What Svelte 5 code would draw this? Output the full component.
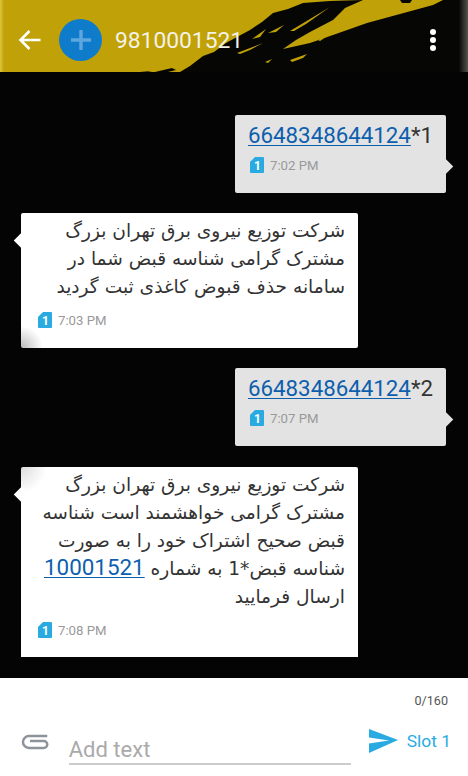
<script>
	const messages = [
		{ id: 1, out: true, link: '6648348644124', text: '*1', time: '7:02 PM' },
		{
			id: 2,
			shade: 'shade-bottom',
			lines: ['شرکت توزیع نیروی برق تهران بزرگ', 'مشترک گرامی شناسه قبض شما در', 'سامانه حذف قبوض کاغذی ثبت گردید'],
			time: '7:03 PM'
		},
		{ id: 3, out: true, link: '6648348644124', text: '*2', time: '7:07 PM' },
		{
			id: 4,
			shade: 'shade-top',
			lines: ['شرکت توزیع نیروی برق تهران بزرگ', 'مشترک گرامی خواهشمند است شناسه', 'قبض صحیح اشتراک خود را به صورت'],
			linkLine: { before: 'شناسه قبض*1 به شماره ', link: '10001521' },
			last: 'ارسال فرمایید',
			time: '7:08 PM'
		}
	];
</script>

<div class="screen">
	<header class="topbar">
		<svg class="wallpaper" viewBox="0 0 468 72" preserveAspectRatio="none" aria-hidden="true">
			<path fill="#060605" d="M180 72 L190 66 L203 56 L214 52 L226 43 L237 37 L250 30 L262 22 L273 13 L288 9 L303 3 L330 1 L363 0 L345 8 L333 20 L310 32 L296 40 L283 49 L310 43 L333 35 L367 23 L400 14 L433 5 L443 0 L468 0 L468 72 Z" />
			<path fill="#060605" d="M155 72 L172 68 L176 70 L168 72 Z M140 72 L152 71 L148 72 Z M400 0 L412 0 L410 3 L402 3 Z" />
			<path fill="#c0a208" d="M290 60 L307 54 L303 58 L292 62 Z M237 53 L263 43 L250 50 L240 54 Z M290 31 L330 7 L306 24 L294 31 Z M268 33 L284 25 L276 32 Z M252 39 L266 29 L260 37 Z M318 40 L326 37 L320 41 Z M338 18 L360 9 L350 15 L340 19 Z M300 40 L322 26 L310 35 Z M265 62 L272 59 L268 63 Z" />
		</svg>
		<button class="back" aria-label="Back">
			<svg viewBox="0 0 24 22" width="24" height="22">
				<path d="M22.5 11H3M11.5 2 2.5 11l9 9" fill="none" stroke="#fff" stroke-width="2.6" />
			</svg>
		</button>
		<div class="avatar">
			<svg viewBox="0 0 20 20" width="20" height="20">
				<path d="M10 0v20M0 10h20" stroke="#5fa6de" stroke-width="3.4" />
			</svg>
		</div>
		<div class="number">9810001521</div>
		<div class="kebab"><i></i><i></i><i></i></div>
	</header>

	<main class="thread">
		{#each messages as m (m.id)}
			<div class="bubble {m.out ? 'out' : 'in'} {m.shade ?? ''}">
				{#if m.out}
					<div class="code"><a href="#{m.id}">{m.link}</a>{m.text}</div>
				{:else}
					<div class="body" dir="rtl">
						{#each m.lines as line}
							<div>{line}</div>
						{/each}
						{#if m.linkLine}
							<div>{m.linkLine.before}<a href="#{m.id}">{m.linkLine.link}</a></div>
							<div>{m.last}</div>
						{/if}
					</div>
				{/if}
				<div class="meta">
					<svg class="sim" viewBox="0 0 14 16" width="14" height="16">
						<path d="M5 0H13a1 1 0 0 1 1 1V15a1 1 0 0 1-1 1H1a1 1 0 0 1-1-1V5Z" fill="#29abe2" />
						<text x="7.4" y="13" text-anchor="middle">1</text>
					</svg>
					<span>{m.time}</span>
				</div>
			</div>
		{/each}
	</main>

	<footer class="composer">
		<div class="count">0/160</div>
		<div class="row">
			<svg class="clip" viewBox="0 0 28 16" width="28" height="16">
				<path d="M26.5 2H8A6 6 0 0 0 8 14H23A3.5 3.5 0 0 0 23 7H9" fill="none" stroke="#8d939b" stroke-width="2.5" />
			</svg>
			<div class="field">Add text</div>
			<div class="send">
				<svg viewBox="0 0 29 24" width="29" height="24">
					<path d="M0 0 29 11 0 24V14.5L20 11.5 0 8.5Z" fill="#29abe2" />
				</svg>
				<span>Slot 1</span>
			</div>
		</div>
	</footer>
</div>

<style>
	:global(body) {
		margin: 0;
		background: #000;
	}
	.screen {
		width: 468px;
		height: 776px;
		display: flex;
		flex-direction: column;
		overflow: hidden;
		font-family: Roboto, sans-serif;
	}
	.topbar {
		position: relative;
		height: 72px;
		flex: none;
		display: flex;
		align-items: center;
		padding: 8px 32px 0 18px;
		box-sizing: border-box;
		background: linear-gradient(90deg, #e0c440 0, #c0a208 4px);
	}
	.topbar::after {
		content: '';
		position: absolute;
		top: 0;
		right: 0;
		bottom: 0;
		width: 9px;
		background: linear-gradient(90deg, #060605, #55554f);
	}
	.wallpaper {
		position: absolute;
		inset: 0;
		width: 100%;
		height: 100%;
	}
	.back,
	.avatar,
	.number,
	.kebab {
		position: relative;
	}
	.back {
		padding: 0;
		border: 0;
		background: none;
		width: 24px;
		height: 22px;
		margin-right: 17px;
	}
	.avatar {
		width: 43px;
		height: 42px;
		border-radius: 50%;
		background: #0f7bcb;
		display: flex;
		align-items: center;
		justify-content: center;
		margin-right: 13px;
		margin-top: -1px;
	}
	.number {
		color: #f4f2e6;
		font-size: 22.8px;
		flex: 1;
	}
	.kebab {
		display: flex;
		flex-direction: column;
		gap: 2px;
	}
	.kebab i {
		width: 6px;
		height: 6px;
		border-radius: 50%;
		background: #fff;
	}
	.thread {
		flex: 1;
		background: #040404;
		display: flex;
		flex-direction: column;
		gap: 20px;
		padding-top: 43px;
		box-sizing: border-box;
	}
	.bubble {
		position: relative;
		box-sizing: border-box;
		border-radius: 2px;
		color: #333;
	}
	.bubble::after {
		content: '';
		position: absolute;
		width: 11px;
		height: 11px;
		transform: rotate(45deg);
	}
	.out {
		width: 211px;
		height: 78px;
		align-self: flex-end;
		margin-right: 22px;
		padding: 7px 13px;
		background: #e3e3e3;
	}
	.out::after {
		right: -5px;
		top: 46px;
		background: #e3e3e3;
	}
	.in {
		width: 337px;
		margin-left: 21px;
		padding: 4px 13px 0 14px;
		background: #fff;
	}
	.in::after {
		left: -5px;
		top: 22px;
		background: #fff;
	}
	.shade-bottom {
		height: 135px;
		background: radial-gradient(circle at 0 100%, #bbb 0, #fff 22px);
	}
	.shade-top {
		height: 190px;
		margin-top: 1px;
		background: radial-gradient(circle at 0 0, #ddd 0, #fff 26px);
		border-radius: 2px 2px 0 0;
	}
	.code {
		font-size: 22.3px;
		line-height: 26px;
	}
	a {
		color: #0d5fae;
		text-decoration: underline;
		text-decoration-thickness: 1px;
		text-underline-offset: 2px;
	}
	.body {
		font-family: 'DejaVu Sans', sans-serif;
		font-size: 18.6px;
		line-height: 28px;
	}
	.body a {
		font-family: Roboto, sans-serif;
		font-size: 22.4px;
		line-height: 1;
	}
	.meta {
		display: flex;
		align-items: center;
		gap: 6px;
		margin: 9px 0 0 2px;
		font-size: 13.2px;
		color: #999;
	}
	.in .meta {
		margin-top: 11px;
		margin-left: 3px;
	}
	.sim text {
		font-family: Roboto, sans-serif;
		font-size: 12px;
		font-weight: 700;
		fill: #fff;
	}
	.composer {
		height: 98px;
		flex: none;
		background: #fff;
		box-sizing: border-box;
		padding: 15px 17px 0 21px;
		display: flex;
		flex-direction: column;
	}
	.count {
		align-self: flex-end;
		margin-right: 3px;
		font-size: 12.6px;
		color: #555;
	}
	.row {
		display: flex;
		align-items: flex-start;
		margin-top: 21px;
	}
	.clip {
		margin-top: 5px;
		margin-right: 20px;
	}
	.field {
		flex: none;
		width: 282px;
		height: 29px;
		margin-top: 5px;
		border-bottom: 2px solid #ccc;
		font-size: 22px;
		line-height: 32px;
		color: #aaa;
		margin-right: 18px;
	}
	.send {
		flex: none;
		display: flex;
		align-items: center;
		gap: 9px;
		font-size: 17.4px;
		color: #29abe2;
		white-space: nowrap;
	}
</style>
